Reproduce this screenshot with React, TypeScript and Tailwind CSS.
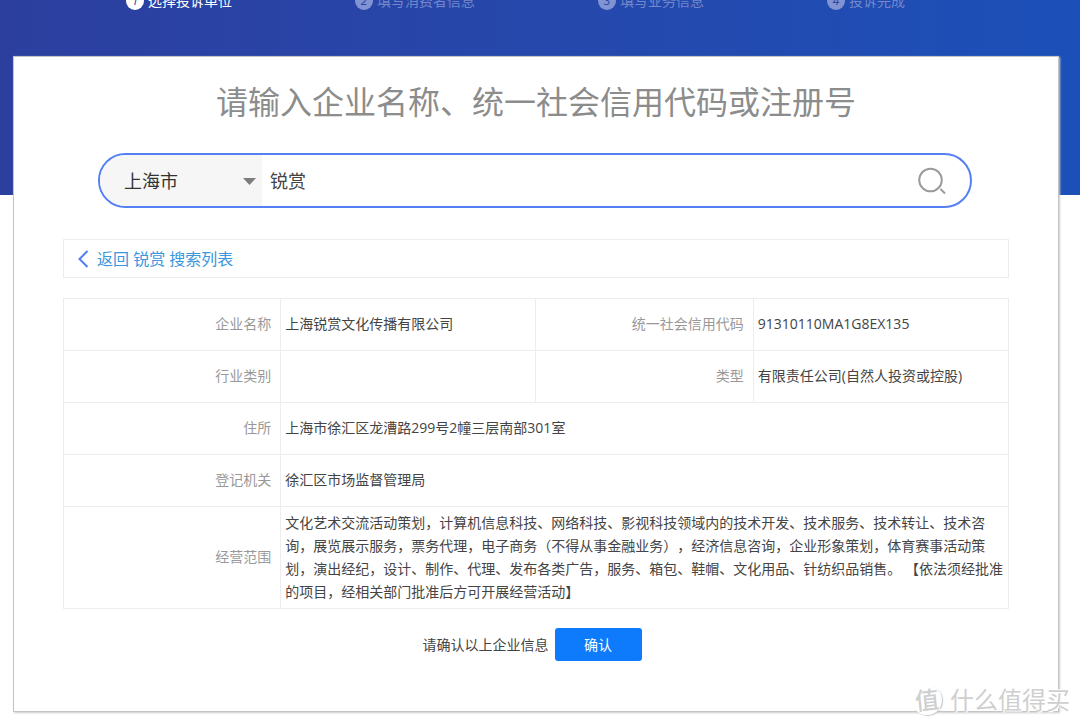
import { useState } from 'react';
import clsx from 'clsx';

interface Step {
  id: number;
  label: string;
}

const steps: Step[] = [
  { id: 1, label: '选择投诉单位' },
  { id: 2, label: '填写消费者信息' },
  { id: 3, label: '填写业务信息' },
  { id: 4, label: '投诉完成' },
];

const company = {
  name: '上海锐赏文化传播有限公司',
  creditCode: '91310110MA1G8EX135',
  industry: '',
  type: '有限责任公司(自然人投资或控股)',
  address: '上海市徐汇区龙漕路299号2幢三层南部301室',
  authority: '徐汇区市场监督管理局',
  scope:
    '文化艺术交流活动策划，计算机信息科技、网络科技、影视科技领域内的技术开发、技术服务、技术转让、技术咨询，展览展示服务，票务代理，电子商务（不得从事金融业务），经济信息咨询，企业形象策划，体育赛事活动策划，演出经纪，设计、制作、代理、发布各类广告，服务、箱包、鞋帽、文化用品、针纺织品销售。 【依法须经批准的项目，经相关部门批准后方可开展经营活动】',
};

function StepBar({ current }: { current: number }) {
  return (
    <ol className="-mt-2 flex justify-between pl-[126px] pr-[175px]">
      {steps.map((step) => (
        <li
          key={step.id}
          className={clsx(
            'flex items-center gap-1 text-sm leading-[18px]',
            step.id === current ? 'text-white' : 'text-[#7488cb]'
          )}
        >
          <span
            className={clsx(
              'flex size-[18px] items-center justify-center rounded-full text-xs italic text-[#2b45a5]',
              step.id === current ? 'bg-white' : 'bg-[#8093d2]'
            )}
          >
            {step.id}
          </span>
          {step.label}
        </li>
      ))}
    </ol>
  );
}

function SearchBox({ keyword, onChange }: { keyword: string; onChange: (v: string) => void }) {
  return (
    <form
      className="ml-[84px] mr-[86px] mt-[27px] flex h-[55px] overflow-hidden rounded-full border-2 border-[#5580f4]"
      onSubmit={(e) => e.preventDefault()}
    >
      <div className="relative w-[162px] shrink-0 bg-[#f6f6f6]">
        <select
          aria-label="地区"
          className="h-full w-full appearance-none bg-transparent pl-6 text-lg text-[#333] outline-none"
          defaultValue="上海市"
        >
          <option>上海市</option>
          <option>北京市</option>
        </select>
        <svg
          className="pointer-events-none absolute right-1.5 top-[23px]"
          width="13"
          height="7"
          viewBox="0 0 13 7"
          fill="#7d7d7d"
        >
          <path d="M0 0h13L6.5 7z" />
        </svg>
      </div>
      <input
        type="text"
        aria-label="企业名称"
        className="min-w-0 flex-1 pl-2 text-lg text-[#444] outline-none"
        value={keyword}
        onChange={(e) => onChange(e.target.value)}
      />
      <button type="submit" aria-label="搜索" className="flex w-[76px] items-center justify-center">
        <svg width="28" height="28" viewBox="0 0 28 28" fill="none" stroke="#9b9b9b" strokeWidth="2">
          <circle cx="12.5" cy="13" r="11.3" />
          <path d="M22.5 22l4.5 4.5" />
        </svg>
      </button>
    </form>
  );
}

function LabelCell({ children }: { children: string }) {
  return (
    <th scope="row" className="border border-[#ededed] pb-0.5 pr-[9px] text-right font-normal text-[#999]">
      {children}
    </th>
  );
}

function ValueCell({ children, span }: { children: string; span?: number }) {
  return (
    <td colSpan={span} className="border border-[#ededed] pb-0.5 pl-1 text-[#444]">
      {children}
    </td>
  );
}

function CompanyTable() {
  return (
    <table className="mt-5 w-full table-fixed border-collapse text-sm leading-[23px]">
      <colgroup>
        <col className="w-[23%]" />
        <col className="w-[27%]" />
        <col className="w-[23%]" />
        <col className="w-[27%]" />
      </colgroup>
      <tbody>
        <tr className="h-[52px]">
          <LabelCell>企业名称</LabelCell>
          <ValueCell>{company.name}</ValueCell>
          <LabelCell>统一社会信用代码</LabelCell>
          <ValueCell>{company.creditCode}</ValueCell>
        </tr>
        <tr className="h-[52px]">
          <LabelCell>行业类别</LabelCell>
          <ValueCell>{company.industry}</ValueCell>
          <LabelCell>类型</LabelCell>
          <ValueCell>{company.type}</ValueCell>
        </tr>
        <tr className="h-[52px]">
          <LabelCell>住所</LabelCell>
          <ValueCell span={3}>{company.address}</ValueCell>
        </tr>
        <tr className="h-[52px]">
          <LabelCell>登记机关</LabelCell>
          <ValueCell span={3}>{company.authority}</ValueCell>
        </tr>
        <tr className="h-[102px]">
          <LabelCell>经营范围</LabelCell>
          <ValueCell span={3}>{company.scope}</ValueCell>
        </tr>
      </tbody>
    </table>
  );
}

function Watermark() {
  return (
    <div className="pointer-events-none absolute bottom-2.5 right-2.5 flex items-center gap-2 text-[#cfcfcf] [text-shadow:1px_1px_0_#fff,-1px_-1px_0_#fff]">
      <span className="flex size-[30px] -rotate-6 items-center justify-center rounded-full bg-white text-2xl font-medium leading-none shadow-[1px_1px_1px_#c8c8c8]">
        值
      </span>
      <span className="text-2xl leading-8">什么值得买</span>
    </div>
  );
}

export default function App() {
  const [keyword, setKeyword] = useState('锐赏');

  return (
    <div
      lang="zh-CN"
      className="relative min-h-screen overflow-hidden bg-white font-['Open_Sans','Noto_Sans_CJK_SC',sans-serif] [text-spacing-trim:space-all]"
    >
      <header className="flow-root h-[195px] bg-gradient-to-r from-[#2c3f9f] to-[#1b50b8]">
        <StepBar current={1} />
      </header>

      <main className="relative -mt-[139px] ml-[13px] mr-[21px] border border-[#c4c4c4] bg-white pb-[50px] pt-[21px] shadow-[1px_1px_2px_#ccc]">
        <h1 className="text-center text-[32px] font-normal leading-[48px] text-[#8c8c8c]">
          请输入企业名称、统一社会信用代码或注册号
        </h1>
        <SearchBox keyword={keyword} onChange={setKeyword} />

        <div className="mx-[49px] mt-[31px]">
          <div className="flex h-[39px] items-center border border-[#ededed] pl-3.5">
            <a href="#list" className="flex items-center gap-2 text-base text-[#3a96dd]">
              <svg width="11" height="18" viewBox="0 0 11 18" fill="none" stroke="#4f7df5" strokeWidth="2">
                <path d="M9.5 1L1.5 9l8 8" />
              </svg>
              返回 {keyword} 搜索列表
            </a>
          </div>

          <CompanyTable />

          <div className="mt-[19px] flex items-center justify-center gap-1.5 pr-2 text-sm text-[#444]">
            <span>请确认以上企业信息</span>
            <button type="button" className="h-[33px] w-[87px] rounded-[3px] bg-[#0d7bfc] text-white">
              确认
            </button>
          </div>
        </div>
      </main>

      <Watermark />
    </div>
  );
}
